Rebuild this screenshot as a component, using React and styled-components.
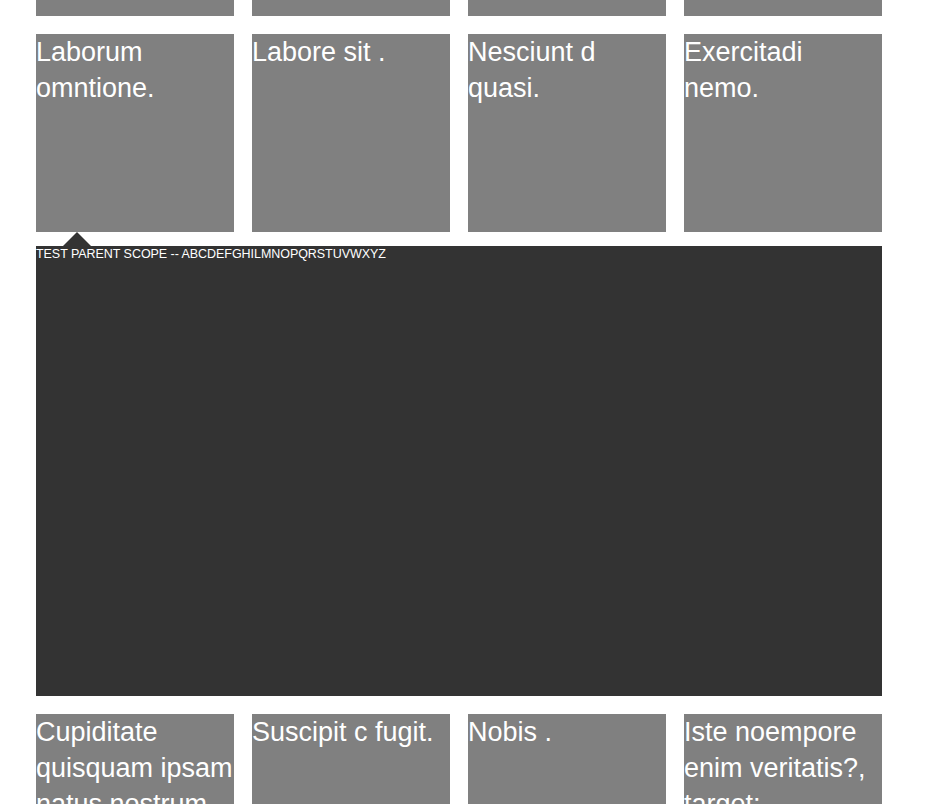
import React from "react";
import styled, { createGlobalStyle } from "styled-components";

const items = [
  "",
  "",
  "",
  "",
  "Laborum omntione.",
  "Labore sit .",
  "Nesciunt d quasi.",
  "Exercitadi nemo.",
  "Cupiditate quisquam ipsam natus nostrum.",
  "Suscipit c fugit.",
  "Nobis .",
  "Iste noempore enim veritatis?, target;",
];

export default function App() {
  const before = items.slice(0, 8);
  const after = items.slice(8);

  return (
    <>
      <GlobalStyle />
      <Grid>
        {before.map((title, i) => (
          <Tile key={i}>{title}</Tile>
        ))}
        <Panel>
          <Arrow />
          <PanelText>TEST PARENT SCOPE -- ABCDEFGHILMNOPQRSTUVWXYZ</PanelText>
        </Panel>
        {after.map((title, i) => (
          <Tile key={i + 8}>{title}</Tile>
        ))}
      </Grid>
    </>
  );
}

const GlobalStyle = createGlobalStyle`
  html, body {
    margin: 0;
    padding: 0;
    background: #fff;
    overflow: hidden;
  }
  body {
    font-family: "Liberation Sans", Arial, sans-serif;
  }
`;

const Grid = styled.div`
  display: grid;
  grid-template-columns: repeat(4, 198px);
  gap: 18px;
  margin: -182px 0 0 36px;
`;

const Tile = styled.div`
  height: 198px;
  background-color: #808080;
  color: #fff;
  font-size: 27px;
  line-height: 36px;
  overflow: visible;
`;

const Panel = styled.div`
  position: relative;
  grid-column: 1 / -1;
  height: 450px;
  margin-top: -4px;
  background-color: #333;
`;

const Arrow = styled.div`
  position: absolute;
  top: -14px;
  left: 27px;
  width: 0;
  height: 0;
  border-left: 14px solid transparent;
  border-right: 14px solid transparent;
  border-bottom: 14px solid #333;
`;

const PanelText = styled.div`
  color: #fff;
  font-size: 12.5px;
  line-height: 17px;
  letter-spacing: -0.05px;
`;
